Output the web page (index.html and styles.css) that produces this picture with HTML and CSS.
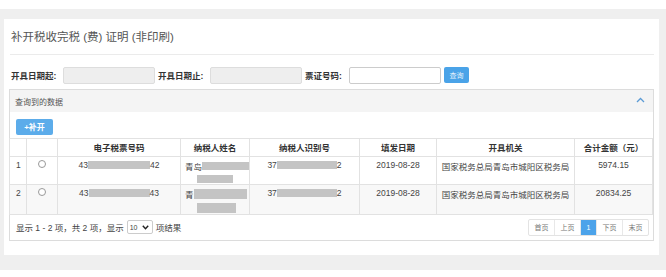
FILE: index.html
```html
<!DOCTYPE html>
<html lang="zh-CN">
<head>
    <meta charset="UTF-8">
    <title>补开税收完税证明</title>
    <link rel="stylesheet" href="styles.css">
</head>
<body>
    <div class="page">
        <div class="card">
            <div class="title">补开税收完税 (费) 证明 (非印刷)</div>
            <div class="search">
                <label>开具日期起:</label>
                <input type="text" class="inp disabled" readonly>
                <label>开具日期止:</label>
                <input type="text" class="inp disabled" readonly>
                <label class="lbl3">票证号码:</label>
                <input type="text" class="inp">
                <button class="btn-query">查询</button>
            </div>
            <div class="panel">
                <div class="panel-head">
                    <span>查询到的数据</span>
                    <svg class="chev" width="9" height="6" viewBox="0 0 9 6"><polyline points="1,5 4.5,1.5 8,5" fill="none" stroke="#5b9bd5" stroke-width="1.3"/></svg>
                </div>
                <div class="toolbar">
                    <button class="btn-add">+补开</button>
                </div>
                <table class="grid">
                    <colgroup>
                        <col style="width:17px"><col style="width:31px"><col style="width:123px"><col style="width:69px">
                        <col style="width:110px"><col style="width:77px"><col style="width:138px"><col style="width:78px">
                    </colgroup>
                    <thead>
                        <tr>
                            <th></th><th></th><th>电子税票号码</th><th>纳税人姓名</th><th>纳税人识别号</th><th>填发日期</th><th>开具机关</th><th>合计金额（元）</th>
                        </tr>
                    </thead>
                    <tbody>
                        <tr>
                            <td class="idx">1</td>
                            <td><span class="radio"></span></td>
                            <td><span class="mask-line">43<i class="mask" style="width:62px"></i>42</span></td>
                            <td class="left"><span class="mask-line">青岛<i class="mask" style="width:50px"></i></span><i class="mask block" style="width:36px"></i></td>
                            <td><span class="mask-line">37<i class="mask" style="width:60px"></i>2</span></td>
                            <td>2019-08-28</td>
                            <td>国家税务总局青岛市城阳区税务局</td>
                            <td>5974.15</td>
                        </tr>
                        <tr class="alt">
                            <td class="idx">2</td>
                            <td><span class="radio"></span></td>
                            <td><span class="mask-line">43<i class="mask" style="width:61px"></i>43</span></td>
                            <td class="left"><span class="mask-line">青<i class="mask tall" style="width:53px"></i></span><i class="mask block tall" style="width:39px"></i></td>
                            <td><span class="mask-line">37<i class="mask" style="width:60px"></i>2</span></td>
                            <td>2019-08-28</td>
                            <td>国家税务总局青岛市城阳区税务局</td>
                            <td>20834.25</td>
                        </tr>
                    </tbody>
                </table>
                <div class="foot">
                    <div class="info">
                        显示 1 - 2 项，共 2 项，显示
                        <span class="size">10 <svg width="7" height="5" viewBox="0 0 7 5"><polyline points="0.8,0.8 3.5,3.8 6.2,0.8" fill="none" stroke="#222" stroke-width="1.4"/></svg></span>
                        项结果
                    </div>
                    <ul class="pager">
                        <li>首页</li><li>上页</li><li class="on">1</li><li>下页</li><li>末页</li>
                    </ul>
                </div>
            </div>
        </div>
    </div>
</body>
</html>
```

FILE: styles.css
```css
body {
    margin: 0;
    background-color: #fff;
    font-family: "Liberation Sans", "Noto Sans CJK SC", sans-serif;
    color: #333;
}
.page {
    margin-top: 9px;
    height: 261px;
    box-sizing: border-box;
    background-color: #efefef;
    padding: 10px 7px 0 4px;
}
.card {
    background-color: #fff;
    height: 236px;
    padding: 0 5px 0 6px;
}
.title {
    height: 35px;
    line-height: 37px;
    padding-left: 1px;
    font-size: 11.5px;
    color: #555;
    border-bottom: 1px solid #ebebeb;
}
.search {
    display: flex;
    align-items: center;
    height: 28px;
    padding: 6px 0 0 1px;
    font-size: 8.5px;
}
.search label {
    font-weight: bold;
    color: #333;
    width: 52px;
}
.search .lbl3 {
    width: 44px;
    margin-left: 0;
}
.inp {
    box-sizing: border-box;
    width: 92px;
    height: 17px;
    margin: 0 3px 0 0;
    border: 1px solid #ccc;
    border-radius: 2px;
    background-color: #fff;
    padding: 0;
}
.inp.disabled {
    background-color: #eee;
    border-color: #ddd;
}
.btn-query {
    height: 16px;
    width: 25px;
    padding: 0;
    border: none;
    border-radius: 2px;
    background-color: #4aa3e8;
    color: #e8f3fc;
    font-size: 7px;
    font-family: inherit;
}
.panel {
    margin-left: -1px;
    border: 1px solid #dcdcdc;
    width: 643px;
}
.panel-head {
    display: flex;
    justify-content: space-between;
    align-items: center;
    height: 22px;
    padding: 0 8px 0 5px;
    background-color: #f4f4f4;
    font-size: 8px;
    color: #555;
}
.chev {
    margin-top: -3px;
}
.toolbar {
    padding: 4px 0 3px 6px;
}
.btn-add {
    width: 37px;
    height: 16px;
    padding: 0;
    border: none;
    border-radius: 2px;
    background-color: #5cacea;
    color: #fff;
    font-size: 8px;
    font-family: inherit;
    font-weight: bold;
}
.grid {
    border-collapse: collapse;
    table-layout: fixed;
    width: 644px;
    margin-left: -1px;
    font-size: 8.5px;
}
.grid th, .grid td {
    border: 1px solid #e2e2e2;
    padding: 0;
    text-align: center;
    overflow: hidden;
    white-space: nowrap;
}
.grid th {
    height: 17px;
    font-weight: bold;
    color: #333;
}
.grid td {
    height: 28px;
    vertical-align: top;
    padding-top: 3px;
    color: #444;
    box-sizing: border-box;
}
.grid tr.alt td {
    height: 30px;
    background-color: #f8f8f8;
}
.grid td.idx {
    text-align: left;
    padding-left: 6px;
}
.grid td.left {
    text-align: left;
    padding-left: 4px;
}
.radio {
    display: inline-block;
    width: 6px;
    height: 6px;
    border: 1px solid #999;
    border-radius: 50%;
    background-color: #fff;
}
.mask-line {
    display: inline-flex;
    align-items: center;
}
.mask {
    display: inline-block;
    height: 8px;
    background-color: #c4c4c4;
}
.mask.tall {
    height: 10px;
}
.mask.block {
    display: block;
    margin: 3px 0 0 12px;
}
.foot {
    display: flex;
    justify-content: space-between;
    align-items: center;
    height: 25px;
    padding: 0 4px 0 6px;
    font-size: 8.5px;
    color: #444;
}
.info {
    display: flex;
    align-items: center;
    gap: 3px;
}
.size {
    display: inline-flex;
    align-items: center;
    justify-content: space-between;
    box-sizing: border-box;
    width: 26px;
    height: 14px;
    padding: 0 3px 0 2px;
    border: 1px solid #ccc;
    border-radius: 2px;
    font-size: 7px;
}
.pager {
    display: flex;
    list-style: none;
    margin: 0;
    padding: 0;
    border: 1px solid #e3e3e3;
    border-radius: 2px;
}
.pager li {
    width: 25px;
    height: 15px;
    line-height: 15px;
    text-align: center;
    font-size: 7px;
    color: #777;
    border-left: 1px solid #e8e8e8;
}
.pager li:first-child {
    border-left: none;
}
.pager li.on {
    width: 15px;
    background-color: #4ca3ea;
    color: #fff;
}
```
